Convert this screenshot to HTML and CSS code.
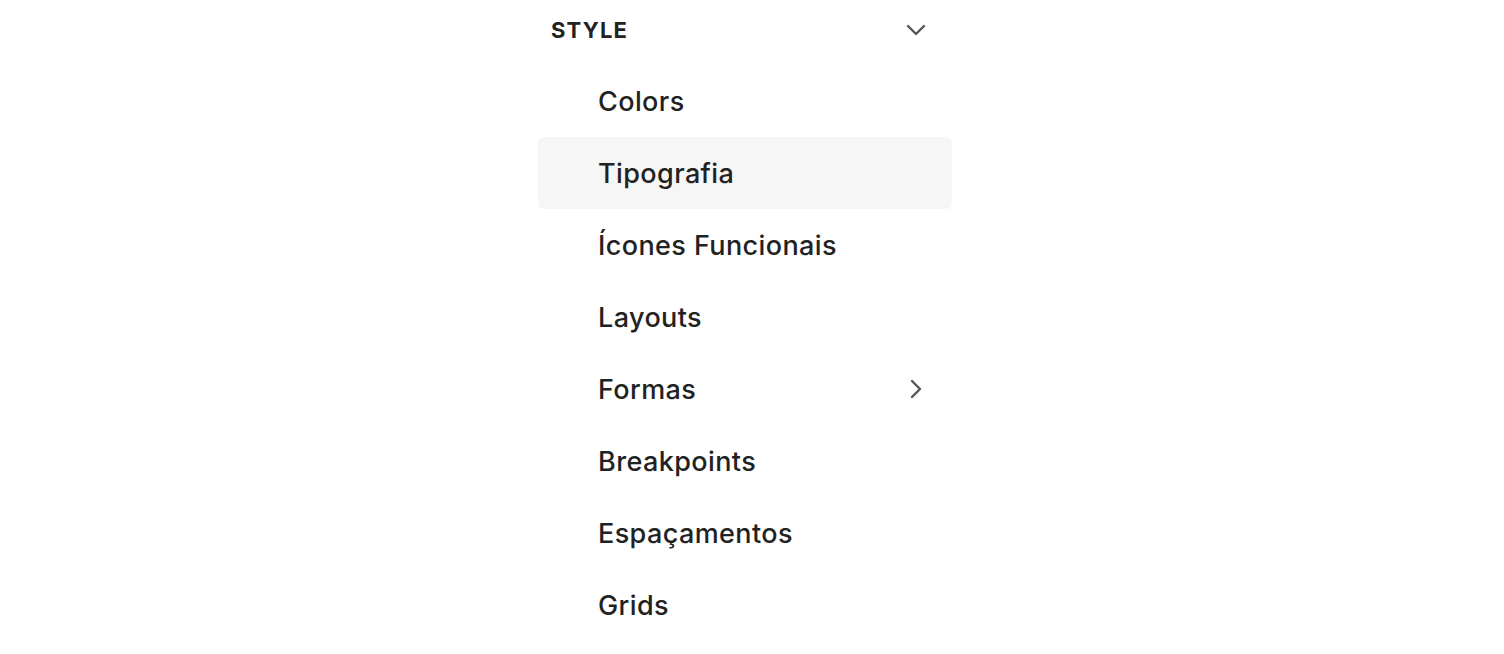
FILE: index.html
```html
<!DOCTYPE html>
<html>
  <head>
    <title>Style</title>
    <link rel="stylesheet" href="styles.css">
  </head>
  <body>
    <nav class="menu">
      <div class="menu-header">
        <span class="menu-title">STYLE</span>
        <svg class="chevron" width="20" height="12" viewBox="0 0 20 12">
          <path d="M2 2 L10 10 L18 2" />
        </svg>
      </div>
      <ul class="menu-list">
        <li class="menu-item">Colors</li>
        <li class="menu-item active">Tipografia</li>
        <li class="menu-item">Ícones Funcionais</li>
        <li class="menu-item">Layouts</li>
        <li class="menu-item">
          Formas
          <svg class="chevron" width="12" height="20" viewBox="0 0 12 20">
            <path d="M2 2 L10 10 L2 18" />
          </svg>
        </li>
        <li class="menu-item">Breakpoints</li>
        <li class="menu-item">Espaçamentos</li>
        <li class="menu-item">Grids</li>
      </ul>
    </nav>
  </body>
</html>
```

FILE: styles.css
```css
body{
  margin: 0;
  background: #fff;
  font-family: Inter, "Noto Sans", sans-serif;
  color: #222;
}
.menu{
  width: 414px;
  margin-left: 538px;
}
.menu-header{
  display: flex;
  align-items: center;
  justify-content: space-between;
  height: 60px;
  padding: 0 26px 0 13px;
}
.menu-title{
  font-size: 22px;
  font-weight: 700;
  letter-spacing: 1.2px;
}
.chevron path{
  fill: none;
  stroke: #555;
  stroke-width: 2.4;
  stroke-linecap: round;
  stroke-linejoin: round;
}
.menu-list{
  list-style: none;
  margin: 5px 0 0;
  padding: 0;
}
.menu-item{
  display: flex;
  align-items: center;
  justify-content: space-between;
  height: 72px;
  padding: 0 30px 0 60px;
  font-size: 27px;
  font-weight: 500;
  letter-spacing: 0.4px;
  border-radius: 6px;
}
.menu-item.active{
  background: #f6f6f6;
}
```
